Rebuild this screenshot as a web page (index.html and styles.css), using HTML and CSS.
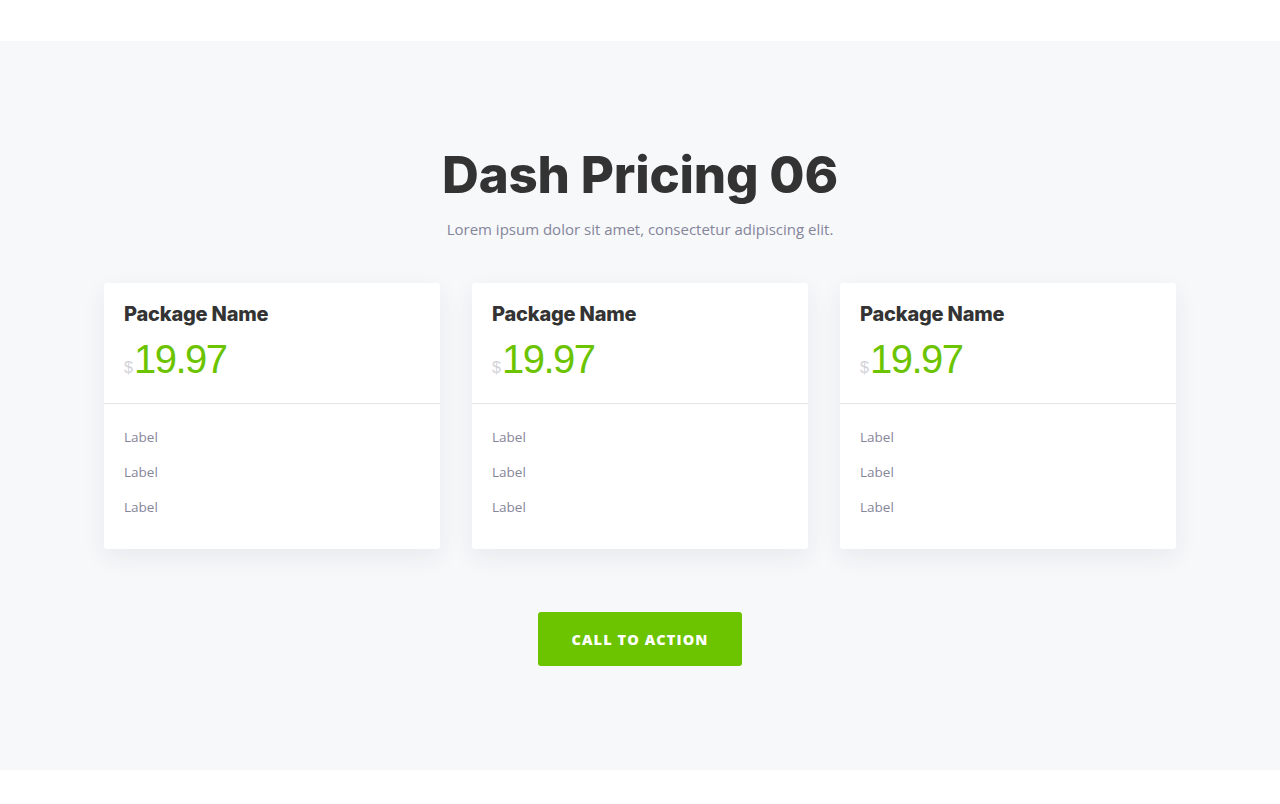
FILE: index.html
```html
<!DOCTYPE html>
<html>
<head>
<meta charset="utf-8">
<link rel="stylesheet" href="styles.css">
</head>
<body>
<div class="topbar"></div>
<section class="pricing">
  <h1 class="title">Dash Pricing 06</h1>
  <p class="subtitle">Lorem ipsum dolor sit amet, consectetur adipiscing elit.</p>
  <div class="cards">
    <div class="card">
      <div class="card-head">
        <h2 class="pkg">Package Name</h2>
        <div class="price"><span class="cur">$</span><span class="amt">19.97</span></div>
      </div>
      <ul class="features">
        <li>Label</li>
        <li>Label</li>
        <li>Label</li>
      </ul>
    </div>
    <div class="card">
      <div class="card-head">
        <h2 class="pkg">Package Name</h2>
        <div class="price"><span class="cur">$</span><span class="amt">19.97</span></div>
      </div>
      <ul class="features">
        <li>Label</li>
        <li>Label</li>
        <li>Label</li>
      </ul>
    </div>
    <div class="card">
      <div class="card-head">
        <h2 class="pkg">Package Name</h2>
        <div class="price"><span class="cur">$</span><span class="amt">19.97</span></div>
      </div>
      <ul class="features">
        <li>Label</li>
        <li>Label</li>
        <li>Label</li>
      </ul>
    </div>
  </div>
  <div class="cta-wrap"><a class="cta" href="#">CALL TO ACTION</a></div>
</section>
</body>
</html>
```
FILE: styles.css
```css
* { box-sizing: border-box; }
html, body { margin: 0; padding: 0; background: #ffffff; }
body { font-family: "Open Sans", "Noto Sans", sans-serif; }
.topbar { height: 41px; background: #ffffff; }
.pricing {
  background: #f7f8fa;
  padding: 103px 0 104px;
  display: flex;
  flex-direction: column;
  align-items: center;
}
.title {
  margin: 0;
  font-family: "Inter", sans-serif;
  font-weight: 800;
  font-size: 51px;
  line-height: 62px;
  color: #333333;
  letter-spacing: -0.2px;
}
.subtitle {
  margin: 11px 0 0;
  font-family: "Open Sans", sans-serif;
  font-size: 15px;
  line-height: 24px;
  color: #85859a;
}
.cards {
  margin-top: 42px;
  display: grid;
  grid-template-columns: repeat(3, 336px);
  gap: 32px;
}
.card {
  background: #ffffff;
  border-radius: 3px;
  box-shadow: 0 8px 24px rgba(30, 40, 60, 0.07);
}
.card-head {
  padding: 18px 20px 16px;
  border-bottom: 1px solid #e6e6e9;
}
.pkg {
  margin: 0;
  font-family: "Inter", sans-serif;
  font-weight: 800;
  font-size: 20px;
  line-height: 26px;
  color: #333333;
  letter-spacing: -0.2px;
}
.price {
  margin-top: 12px;
  height: 48px;
  line-height: 48px;
  white-space: nowrap;
}
.cur {
  font-family: "Liberation Sans", sans-serif;
  font-size: 16px;
  line-height: 1;
  color: #d2d2d7;
  margin-right: 1px;
  vertical-align: baseline;
}
.amt {
  font-family: "Liberation Sans", sans-serif;
  font-size: 40px;
  line-height: 1;
  color: #6cc400;
  letter-spacing: -1.5px;
  vertical-align: baseline;
}
.features {
  list-style: none;
  margin: 0;
  padding: 16px 20px 24px;
}
.features li {
  font-family: "Open Sans", sans-serif;
  font-size: 13.5px;
  line-height: 35px;
  color: #85859a;
}
.cta-wrap { margin-top: 63px; }
.cta {
  display: flex;
  align-items: center;
  justify-content: center;
  width: 204px;
  height: 54px;
  background: #6cc400;
  border-radius: 3px;
  color: #ffffff;
  text-decoration: none;
  font-family: "Open Sans", sans-serif;
  font-weight: 800;
  font-size: 14.5px;
  letter-spacing: 1.1px;
}
```
